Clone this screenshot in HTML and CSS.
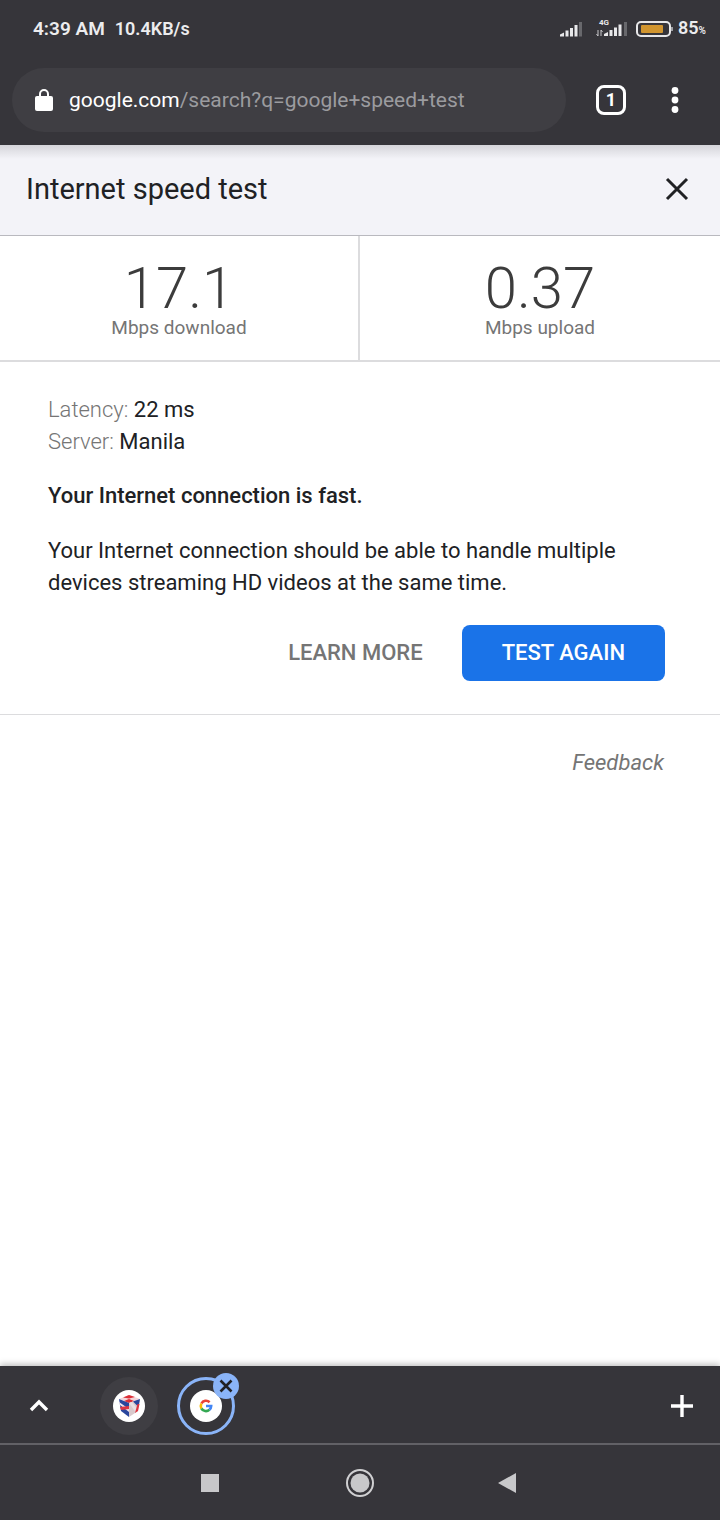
FILE: index.html
```html
<!DOCTYPE html>
<html lang="en">
	<head>
		<meta charset="utf-8" />
		<meta name="viewport" content="width=device-width" />
		<title>google speed test</title>
		<link rel="stylesheet" href="styles.css">
	</head>
	<body>
		<header class="browser">
			<div class="status">
				<span class="clock">4:39 AM</span>
				<span class="rate">10.4KB/s</span>
				<svg class="signal" width="24" height="16" viewBox="0 0 24 16" fill="#e8e8ea">
					<path d="M1 15.5v-2l4-2v4zM6.5 15.5v-6h3v6zM11 15.5V7h3v8.500zM15.500 15.500V4h3v11.500z" />
					<path d="M20 15.500V1h3v14.500z" fill="#68686c" />
				</svg>
				<svg class="signal-4g" width="33" height="20" viewBox="0 0 33 20" fill="#e8e8ea">
					<text x="4" y="7" class="network">4G</text>
					<path d="M3 12v6M1.500 16l1.500 2M6 18v-6M6 12l1.500 2" fill="none" stroke="#c8c8ca" />
					<path d="M9 18v-2l4-2v4zM14.500 18v-6h3v6zM19 18V9.500h3V18zM23.500 18V6.500h3V18z" />
					<path d="M29 18V4h3v14z" fill="#68686c" />
				</svg>
				<svg class="battery" width="38" height="18" viewBox="0 0 38 18">
					<rect x="1" y="2" width="33" height="14" rx="4" fill="none" stroke="#e8e8ea" stroke-width="2" />
					<rect x="5" y="5" width="22" height="8" rx="1" fill="#d1952f" />
					<path d="M36 7v4" stroke="#a0a0a4" stroke-width="2" />
				</svg>
				<span class="charge">85<small>%</small></span>
			</div>
			<div class="toolbar">
				<button class="address" aria-label="Edit address">
					<svg width="18" height="24" viewBox="0 0 18 24">
						<rect x="0" y="8" width="18" height="15" rx="2" fill="#fff" />
						<path d="M5 9V6a4 4 0 0 1 8 0v3" fill="none" stroke="#fff" stroke-width="2" />
					</svg>
					<span class="url">google.com<span class="path">/search?q=google+speed+test</span></span>
				</button>
				<button class="tabs" aria-label="Tabs">1</button>
				<button class="menu" aria-label="Menu">
					<svg width="8" height="28" viewBox="0 0 8 28" fill="#fff">
						<circle cx="4" cy="4.500" r="3.400" />
						<circle cx="4" cy="14" r="3.400" />
						<circle cx="4" cy="23.500" r="3.400" />
					</svg>
				</button>
			</div>
		</header>

		<main>
			<div class="title">
				<h1>Internet speed test</h1>
				<button class="close" aria-label="Close">
					<svg width="24" height="24" viewBox="0 0 24 24">
						<path d="M2 2l20 20M22 2L2 22" stroke="#202124" stroke-width="3" />
					</svg>
				</button>
			</div>

			<div class="results">
				<div class="result">
					<div class="number">17.1</div>
					<div class="unit">Mbps download</div>
				</div>
				<div class="result">
					<div class="number">0.37</div>
					<div class="unit">Mbps upload</div>
				</div>
			</div>

			<div class="details">
				<p><span class="label">Latency:</span> 22 ms<br>
				<span class="label">Server:</span> Manila</p>
				<p class="verdict">Your Internet connection is fast.</p>
				<p>Your Internet connection should be able to handle multiple devices streaming HD videos at the same time.</p>
				<div class="actions">
					<a class="learn" href="#">LEARN MORE</a>
					<button class="again">TEST AGAIN</button>
				</div>
			</div>

			<div class="feedback"><a href="#">Feedback</a></div>
		</main>

		<footer>
			<div class="strip">
				<button class="expand" aria-label="Show all tabs">
					<svg width="20" height="14" viewBox="0 0 20 14">
						<path d="M2 11l8-8 8 8" fill="none" stroke="#fff" stroke-width="3.400" />
					</svg>
				</button>
				<button class="tab" aria-label="Speedtest tab">
					<svg width="32" height="32" viewBox="0 0 32 32">
						<circle cx="16" cy="16" r="16" fill="#fff" />
						<path d="M6 9l10-4 11 4-11 4z" fill="#f3d5da" />
						<path d="M10 7.500l6-2.500 6 2-6 1.500zM11 11l5-2 5 2-5 2z" fill="#dc2f37" />
						<path d="M6 9l10 4v14l-8-6z" fill="#2a469c" />
						<path d="M6 12l10 7v3L7 15z" fill="#f1e4ea" />
						<path d="M7 17l9-1v3l-8 1z" fill="#df3540" />
						<path d="M16 13l11-4-2 12-9 6z" fill="#d9c9cc" />
						<path d="M20 11.500L27 9l-1.500 8z" fill="#2a469c" />
						<path d="M16 13l3-1 5.500 7-2 3z" fill="#e8e0e4" />
						<path d="M24.500 14l2 0-1.500 7-3 2z" fill="#df3540" />
					</svg>
				</button>
				<div class="tab current">
					<button class="favicon" aria-label="Google tab">
						<svg width="32" height="32" viewBox="0 0 32 32">
							<circle cx="16" cy="16" r="16" fill="#fff" />
							<g fill="none" stroke-width="2.600">
								<path d="M19.600 12.200A5.200 5.200 0 0 0 11.400 13.500" stroke="#ea4335" />
								<path d="M11.400 13.500a5.200 5.200 0 0 0 0 5" stroke="#fbbc05" />
								<path d="M11.400 18.500a5.200 5.200 0 0 0 8 1.300" stroke="#34a853" />
								<path d="M19.400 19.800A5.200 5.200 0 0 0 21.200 16H16" stroke="#4285f4" />
							</g>
						</svg>
					</button>
					<button class="remove" aria-label="Close tab">
						<svg width="14" height="14" viewBox="0 0 14 14">
							<path d="M1.500 1.500l11 11M12.500 1.500l-11 11" stroke="#202124" stroke-width="2.600" />
						</svg>
					</button>
				</div>
				<button class="add" aria-label="New tab">
					<svg width="24" height="24" viewBox="0 0 24 24">
						<path d="M12 1v22M1 12h22" stroke="#fff" stroke-width="3.400" />
					</svg>
				</button>
			</div>
			<nav>
				<button aria-label="Recent apps">
					<svg width="20" height="20" viewBox="0 0 20 20"><path d="M0 1h18v18H0z" fill="#c8c8ca" /></svg>
				</button>
				<button aria-label="Home">
					<svg width="28" height="28" viewBox="0 0 28 28">
						<circle cx="14" cy="14" r="13" fill="none" stroke="#d0d0d2" stroke-width="2" />
						<circle cx="14" cy="14" r="9.500" fill="#c8c8ca" />
					</svg>
				</button>
				<button aria-label="Back">
					<svg width="20" height="22" viewBox="0 0 20 22"><path d="M17 1v20L-1 11z" fill="#c8c8ca" /></svg>
				</button>
			</nav>
		</footer>
	</body>
</html>
```
FILE: styles.css
```css
* {
	box-sizing: border-box;
}
body {
	margin: 0;
	min-height: 100vh;
	display: flex;
	flex-direction: column;
	font-family: Roboto, sans-serif;
	font-size: 22px;
	line-height: 32px;
	color: #202124;
	background: #fff;
}
button {
	font: inherit;
	color: inherit;
	padding: 0;
	border: 0;
	background: none;
}
a {
	color: #757575;
	text-decoration: none;
}
svg {
	display: block;
	overflow: visible;
}

/* status bar and address bar */
.browser {
	background: #36353a;
	color: #fff;
}
.status {
	display: flex;
	align-items: center;
	height: 58px;
	padding: 0 14px 0 33px;
	font-size: 18px;
	font-weight: 600;
	color: #ececee;
}
.clock {
	font-size: 19px;
}
.rate {
	margin: 0 auto 0 10px;
}
.signal {
	margin-right: 12px;
}
.signal-4g {
	margin: 0 8px 2px 0;
}
.network {
	font-size: 8px;
	font-weight: 700;
}
.battery {
	margin-right: 4px;
}
.charge small {
	font-size: 10px;
}
.toolbar {
	display: flex;
	align-items: center;
	padding: 10px 41px 13px 12px;
}
.address {
	flex: 1;
	display: flex;
	align-items: center;
	gap: 16px;
	height: 64px;
	padding: 0 23px;
	border-radius: 32px;
	background: #3f3e43;
	text-align: left;
}
.path {
	color: #9b9b9f;
}
.url {
	font-size: 21px;
}
.tabs {
	width: 30px;
	height: 30px;
	margin: 0 45px 0 30px;
	border: 3px solid #fff;
	border-radius: 8px;
	font-size: 18px;
	font-weight: 700;
	line-height: 24px;
}

/* speed test */
main {
	flex: 1;
}
.title {
	display: flex;
	align-items: center;
	justify-content: space-between;
	height: 91px;
	padding: 0 31px 3px 26px;
	border-bottom: 1px solid #b9b9bf;
	background: linear-gradient(#d5d5da, #f3f3f8 14px);
}
h1 {
	margin: 0;
	font-size: 29px;
	font-weight: 400;
}
.results {
	display: grid;
	grid-template-columns: 1fr 1fr;
	border-bottom: 2px solid #dcdcde;
	text-align: center;
}
.result {
	padding: 23px 0 21px;
}
.result:first-child {
	border-right: 2px solid #dcdcde;
}
.number {
	font-size: 58px;
	font-weight: 300;
	line-height: 58px;
	color: #3c3c3c;
}
.unit {
	font-size: 19px;
	line-height: 22px;
	color: #757575;
}
.details {
	padding: 32px 55px 33px 48px;
	border-bottom: 1px solid #dcdcde;
}
.details p {
	margin: 0 0 22px;
}
.label {
	font-weight: 300;
	color: #757575;
}
.details .verdict {
	margin-bottom: 23px;
	font-weight: 500;
}
.actions {
	display: flex;
	align-items: center;
	justify-content: flex-end;
	gap: 39px;
	margin-top: 26px;
	font-weight: 500;
}
.again {
	height: 56px;
	padding: 0 40px;
	border-radius: 8px;
	background: #1a73e8;
	color: #fff;
}
.feedback {
	padding: 32px 56px;
	text-align: right;
	font-style: italic;
}

/* tab strip and system navigation */
footer {
	background: #36353a;
	box-shadow: 0 -2px 6px rgba(0, 0, 0, .25);
}
.strip {
	display: flex;
	align-items: center;
	height: 79px;
	padding: 3px 26px 0 29px;
	border-bottom: 2px solid #626166;
}
.tab {
	display: flex;
	align-items: center;
	justify-content: center;
	width: 58px;
	height: 58px;
	margin-left: 51px;
	border-radius: 50%;
	background: #3f3e43;
}
.current {
	position: relative;
	margin-left: 19px;
	border: 3px solid #8ab4f8;
	background: none;
}
.remove {
	position: absolute;
	top: -7px;
	right: -7px;
	display: flex;
	align-items: center;
	justify-content: center;
	width: 26px;
	height: 26px;
	border-radius: 50%;
	background: #8ab4f8;
}
.add {
	margin-left: auto;
}
nav {
	display: flex;
	align-items: center;
	justify-content: center;
	gap: 125px;
	height: 75px;
}
```
